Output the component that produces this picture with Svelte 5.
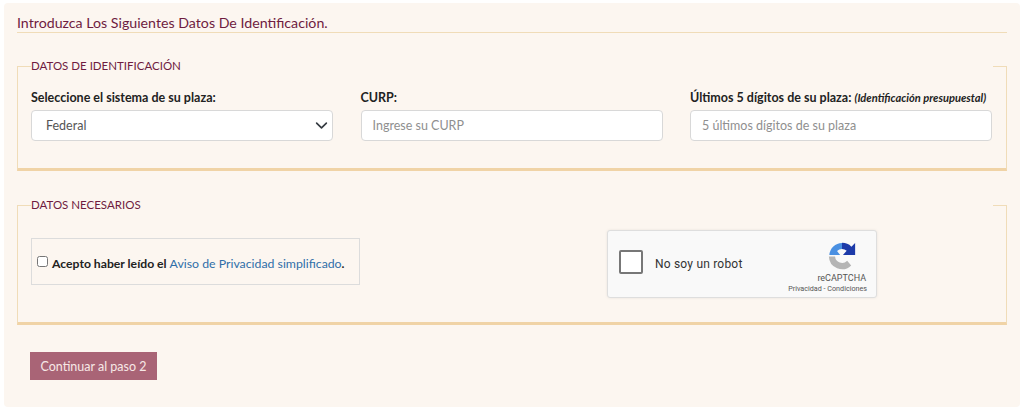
<script>
	let system = $state('Federal');
</script>

<div class="page">
	<h2 class="title">Introduzca Los Siguientes Datos De Identificación.</h2>

	<fieldset class="group first">
		<legend>DATOS DE IDENTIFICACIÓN</legend>
		<div class="fields">
			<div class="field">
				<label for="sistema">Seleccione el sistema de su plaza:</label>
				<div class="select">
					<select id="sistema" bind:value={system}>
						<option>Federal</option>
						<option>Estatal</option>
					</select>
					<svg viewBox="0 0 16 16" width="13" height="13" aria-hidden="true">
						<path d="M2 5l6 6 6-6" fill="none" stroke="#343a40" stroke-width="2" stroke-linecap="round" stroke-linejoin="round" />
					</svg>
				</div>
			</div>
			<div class="field">
				<label for="curp">CURP:</label>
				<input id="curp" type="text" placeholder="Ingrese su CURP" />
			</div>
			<div class="field">
				<label for="plaza">Últimos 5 dígitos de su plaza: <em>(Identificación presupuestal)</em></label>
				<input id="plaza" type="text" placeholder="5 últimos dígitos de su plaza" />
			</div>
		</div>
	</fieldset>

	<fieldset class="group second">
		<legend>DATOS NECESARIOS</legend>
		<div class="needed">
			<div class="privacy">
				<input type="checkbox" id="aviso" />
				<label for="aviso">Acepto haber leído el <a href="#aviso">Aviso de Privacidad simplificado</a>.</label>
			</div>
			<div class="captcha">
				<span class="box"></span>
				<span class="robot">No soy un robot</span>
				<div class="brand">
					<svg viewBox="0 0 32 32" width="30" height="30" aria-hidden="true">
						<path d="M16 2A14 14 0 0 0 2.500 15H14L10.700 10.700A7.500 7.500 0 0 1 16 8.500Z" fill="#4a90e2" />
						<path d="M16 2V8.500A7.500 7.500 0 0 1 21 10.500L17 15H30V2L26 6A14 14 0 0 0 16 2Z" fill="#1c3aa9" />
						<path d="M2 16.500H8.600A7.500 7.500 0 0 0 21.500 21L25.800 26A14 14 0 0 1 2 16.500Z" fill="#b5b5b5" />
					</svg>
					<span class="name">reCAPTCHA</span>
					<span class="terms">Privacidad - Condiciones</span>
				</div>
			</div>
		</div>
	</fieldset>

	<button class="next" type="button">Continuar al paso 2</button>
</div>

<style>
	:global(body) {
		background: #fff;
		font-family: Lato, "Liberation Sans", sans-serif;
	}
	.page {
		box-sizing: border-box;
		width: 1016px;
		height: 404px;
		margin: 3px 0 0 4px;
		padding: 12px 13px 0;
		background: #fcf6f0;
		border-radius: 4px;
	}
	.title {
		margin: 0;
		padding-bottom: 1px;
		height: 16px;
		line-height: 16px;
		font-size: 14.2px;
		font-weight: 400;
		color: #6f1c3f;
		border-bottom: 1px solid #f0dcb8;
	}
	.group {
		box-sizing: border-box;
		margin: 25px 0 0;
		padding: 0 13px;
		border: 1px solid #f0dcb8;
		border-bottom: 3px solid #f0d3a6;
		min-width: 0;
	}
	.first {
		height: 113px;
	}
	.second {
		margin-top: 26px;
		height: 128px;
	}
	legend {
		box-sizing: border-box;
		width: 100%;
		padding: 0;
		font-size: 11.5px;
		line-height: 16px;
		color: #6f1c3f;
	}
	.fields {
		display: grid;
		grid-template-columns: repeat(3, 302px);
		column-gap: 27.5px;
		margin-top: 15px;
	}
	.field label {
		display: block;
		height: 18px;
		line-height: 18px;
		margin-bottom: 3px;
		font-size: 12.5px;
		font-weight: 700;
		color: #222;
		white-space: nowrap;
	}
	em {
		font-size: 11.1px;
	}
	.select {
		position: relative;
	}
	.select svg {
		position: absolute;
		right: 5px;
		top: 9px;
	}
	select,
	.field input {
		box-sizing: border-box;
		width: 100%;
		height: 31px;
		padding: 0 11px;
		background: #fff;
		border: 1px solid #d8d8d8;
		border-radius: 4px;
		font: 12.5px Lato, "Liberation Sans", sans-serif;
		color: #555;
		outline: none;
		appearance: none;
	}
	select {
		padding-left: 14px;
	}
	.field input::placeholder {
		color: #8f8f8f;
		opacity: 1;
	}
	.needed {
		display: flex;
		align-items: flex-start;
		margin-top: 17px;
	}
	.privacy {
		box-sizing: border-box;
		display: flex;
		align-items: center;
		gap: 4px;
		width: 329px;
		height: 47px;
		margin-top: 8px;
		padding-left: 5px;
		border: 1px solid #dcdcdc;
	}
	.privacy input {
		width: 11px;
		height: 11px;
		margin: 0 0 1px;
		flex: none;
	}
	.privacy label {
		margin-top: 3px;
		font-size: 12.2px;
		font-weight: 700;
		color: #222;
		white-space: nowrap;
	}
	.privacy a {
		font-size: 12.3px;
		font-weight: 400;
		color: #2f6ea8;
		text-decoration: none;
	}
	.captcha {
		box-sizing: border-box;
		display: flex;
		align-items: center;
		width: 270px;
		height: 68px;
		margin-left: 247px;
		padding: 0 9px 0 11px;
		background: #f9f9f9;
		border: 1px solid #dedede;
		border-radius: 3px;
		box-shadow: 0 0 3px rgba(0, 0, 0, 0.08);
		font-family: Roboto, "Liberation Sans", sans-serif;
	}
	.box {
		box-sizing: border-box;
		width: 24px;
		height: 24px;
		margin-bottom: 4px;
		background: #fff;
		border: 2px solid #777;
		border-radius: 2px;
	}
	.robot {
		margin-left: 12px;
		font-size: 12px;
		letter-spacing: 0.2px;
		color: #333;
	}
	.brand {
		display: flex;
		flex-direction: column;
		align-items: flex-end;
		align-self: flex-start;
		margin-left: auto;
		padding-top: 10px;
		color: #555;
	}
	.brand svg {
		margin-right: 10px;
	}
	.name {
		margin: 2px 1px 0 0;
		font-size: 9px;
		line-height: 11px;
	}
	.terms {
		font-size: 7.2px;
		line-height: 10px;
	}
	.next {
		display: block;
		width: 127px;
		height: 28px;
		margin: 27px 0 0 13px;
		padding: 0;
		border: none;
		background: #a96476;
		color: #f7e8e6;
		font: 12.5px Lato, "Liberation Sans", sans-serif;
	}
</style>
